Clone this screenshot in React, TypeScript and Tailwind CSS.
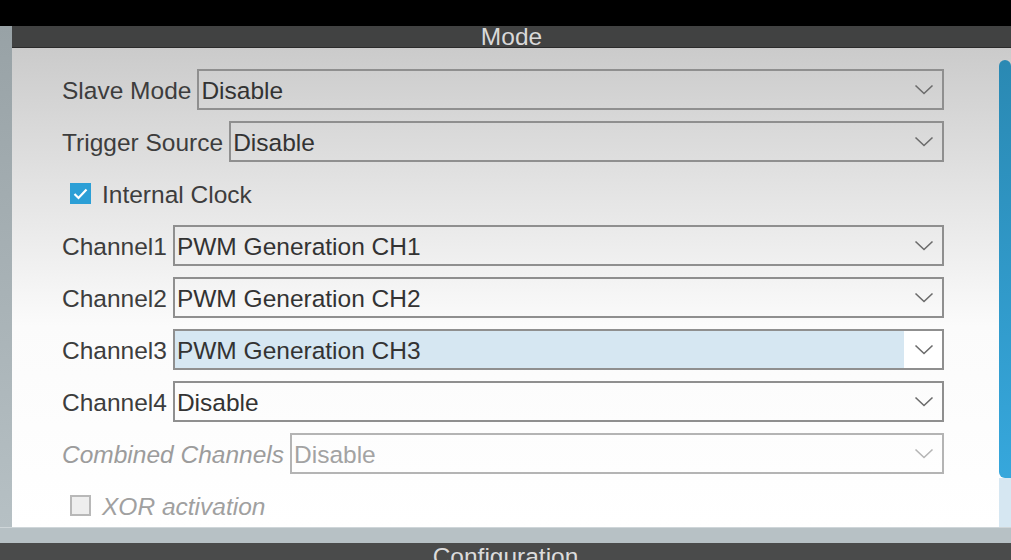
import React from 'react'

const Chevron = ({ color = '#6b6b6b' }: { color?: string }) => (
  <svg width="20" height="11" viewBox="0 0 20 11" fill="none">
    <polyline points="1.5,1.5 10,9.5 18.5,1.5" stroke={color} strokeWidth="1.6" />
  </svg>
)

type SelectRowProps = {
  label: string
  value: string
  highlighted?: boolean
  disabled?: boolean
}

const SelectRow = ({ label, value, highlighted, disabled }: SelectRowProps) => (
  <div className="flex h-[41px] items-center">
    <span
      className={
        disabled
          ? 'mr-[6px] whitespace-nowrap pt-[3px] italic text-[#9c9c9c]'
          : 'mr-[6px] whitespace-nowrap pt-[3px] text-[#3d3d3d]'
      }
    >
      {label}
    </span>
    <div
      className={
        disabled
          ? 'flex h-full flex-1 items-stretch border-2 border-[#b4b4b4]'
          : 'flex h-full flex-1 items-stretch border-2 border-[#8f8f8f]'
      }
    >
      <div
        className={
          highlighted
            ? 'flex flex-1 items-center bg-[#d6e7f2] pl-[2px] pt-[3px] text-[#333333]'
            : disabled
              ? 'flex flex-1 items-center pl-[2px] pt-[3px] text-[#a3a3a3]'
              : 'flex flex-1 items-center pl-[2px] pt-[3px] text-[#333333]'
        }
      >
        {value}
      </div>
      <div className={highlighted ? 'flex w-[38px] items-center justify-center bg-white pl-[2px]' : 'flex w-[38px] items-center justify-center pl-[2px]'}>
        <Chevron color={disabled ? '#b5b5b5' : '#6b6b6b'} />
      </div>
    </div>
  </div>
)

const CheckRow = ({ label, checked, disabled }: { label: string; checked?: boolean; disabled?: boolean }) => (
  <div className="flex h-[41px] items-center pl-[8px]">
    {checked ? (
      <div className="flex h-[21px] w-[21px] items-center justify-center bg-[#2c9fd6]">
        <svg width="15" height="12" viewBox="0 0 15 12" fill="none">
          <polyline points="1.5,6 5.5,10 13.5,1.5" stroke="white" strokeWidth="2.2" />
        </svg>
      </div>
    ) : (
      <div className="h-[21px] w-[21px] border-2 border-[#b8b8b8] bg-[#eeeeee]" />
    )}
    <span className={disabled ? 'ml-[11px] pt-[3px] italic text-[#a0a0a0]' : 'ml-[11px] pt-[3px] text-[#3d3d3d]'}>{label}</span>
  </div>
)

export default function App() {
  return (
    <div
      className="flex h-[560px] w-[1011px] flex-col overflow-hidden bg-black text-[24.5px]"
      style={{ fontFamily: '"Liberation Sans", Arial, sans-serif' }}
    >
      <div className="h-[26px] shrink-0 bg-black" />
      <div className="flex h-[501px] shrink-0">
        <div className="w-[12px] shrink-0 bg-[linear-gradient(to_bottom,#98a2a6,#b6c0c4)]" />
        <div className="flex flex-1 flex-col">
          {/* Mode header */}
          <div className="flex h-[22px] shrink-0 justify-center overflow-hidden border-b border-[#2b2b2b] bg-[#414242]">
            <span className="leading-[22px] text-[#d9d9d9]">Mode</span>
          </div>
          {/* Panel */}
          <div className="flex flex-1 bg-[linear-gradient(to_bottom,#cbcbcb_0%,#fbfbfb_58%,#ffffff_100%)]">
            <div className="flex flex-1 flex-col gap-[11px] pl-[50px] pr-[55px] pt-[21px]">
              <SelectRow label="Slave Mode" value="Disable" />
              <SelectRow label="Trigger Source" value="Disable" />
              <CheckRow label="Internal Clock" checked />
              <SelectRow label="Channel1" value="PWM Generation CH1" />
              <SelectRow label="Channel2" value="PWM Generation CH2" />
              <SelectRow label="Channel3" value="PWM Generation CH3" highlighted />
              <SelectRow label="Channel4" value="Disable" />
              <SelectRow label="Combined Channels" value="Disable" disabled />
              <CheckRow label="XOR activation" disabled />
            </div>
            {/* Scrollbar */}
            <div className="flex w-[12px] shrink-0 flex-col pt-[12px]">
              <div className="h-[418px] rounded-t-[6px] rounded-bl-[6px] bg-[linear-gradient(to_bottom,#2a89b3,#36a7dc)]" />
              <div className="flex-1 bg-[#d6e7f2]" />
            </div>
          </div>
        </div>
      </div>
      <div className="h-[16px] shrink-0 border-t border-[#cfd6d9] bg-[#b7c1c5]" />
      <div className="flex h-[17px] shrink-0 justify-center overflow-hidden bg-[#4a4b4b]">
        <span className="pt-[5px] leading-[18px] text-[#dcdcdc]">Configuration</span>
      </div>
    </div>
  )
}
